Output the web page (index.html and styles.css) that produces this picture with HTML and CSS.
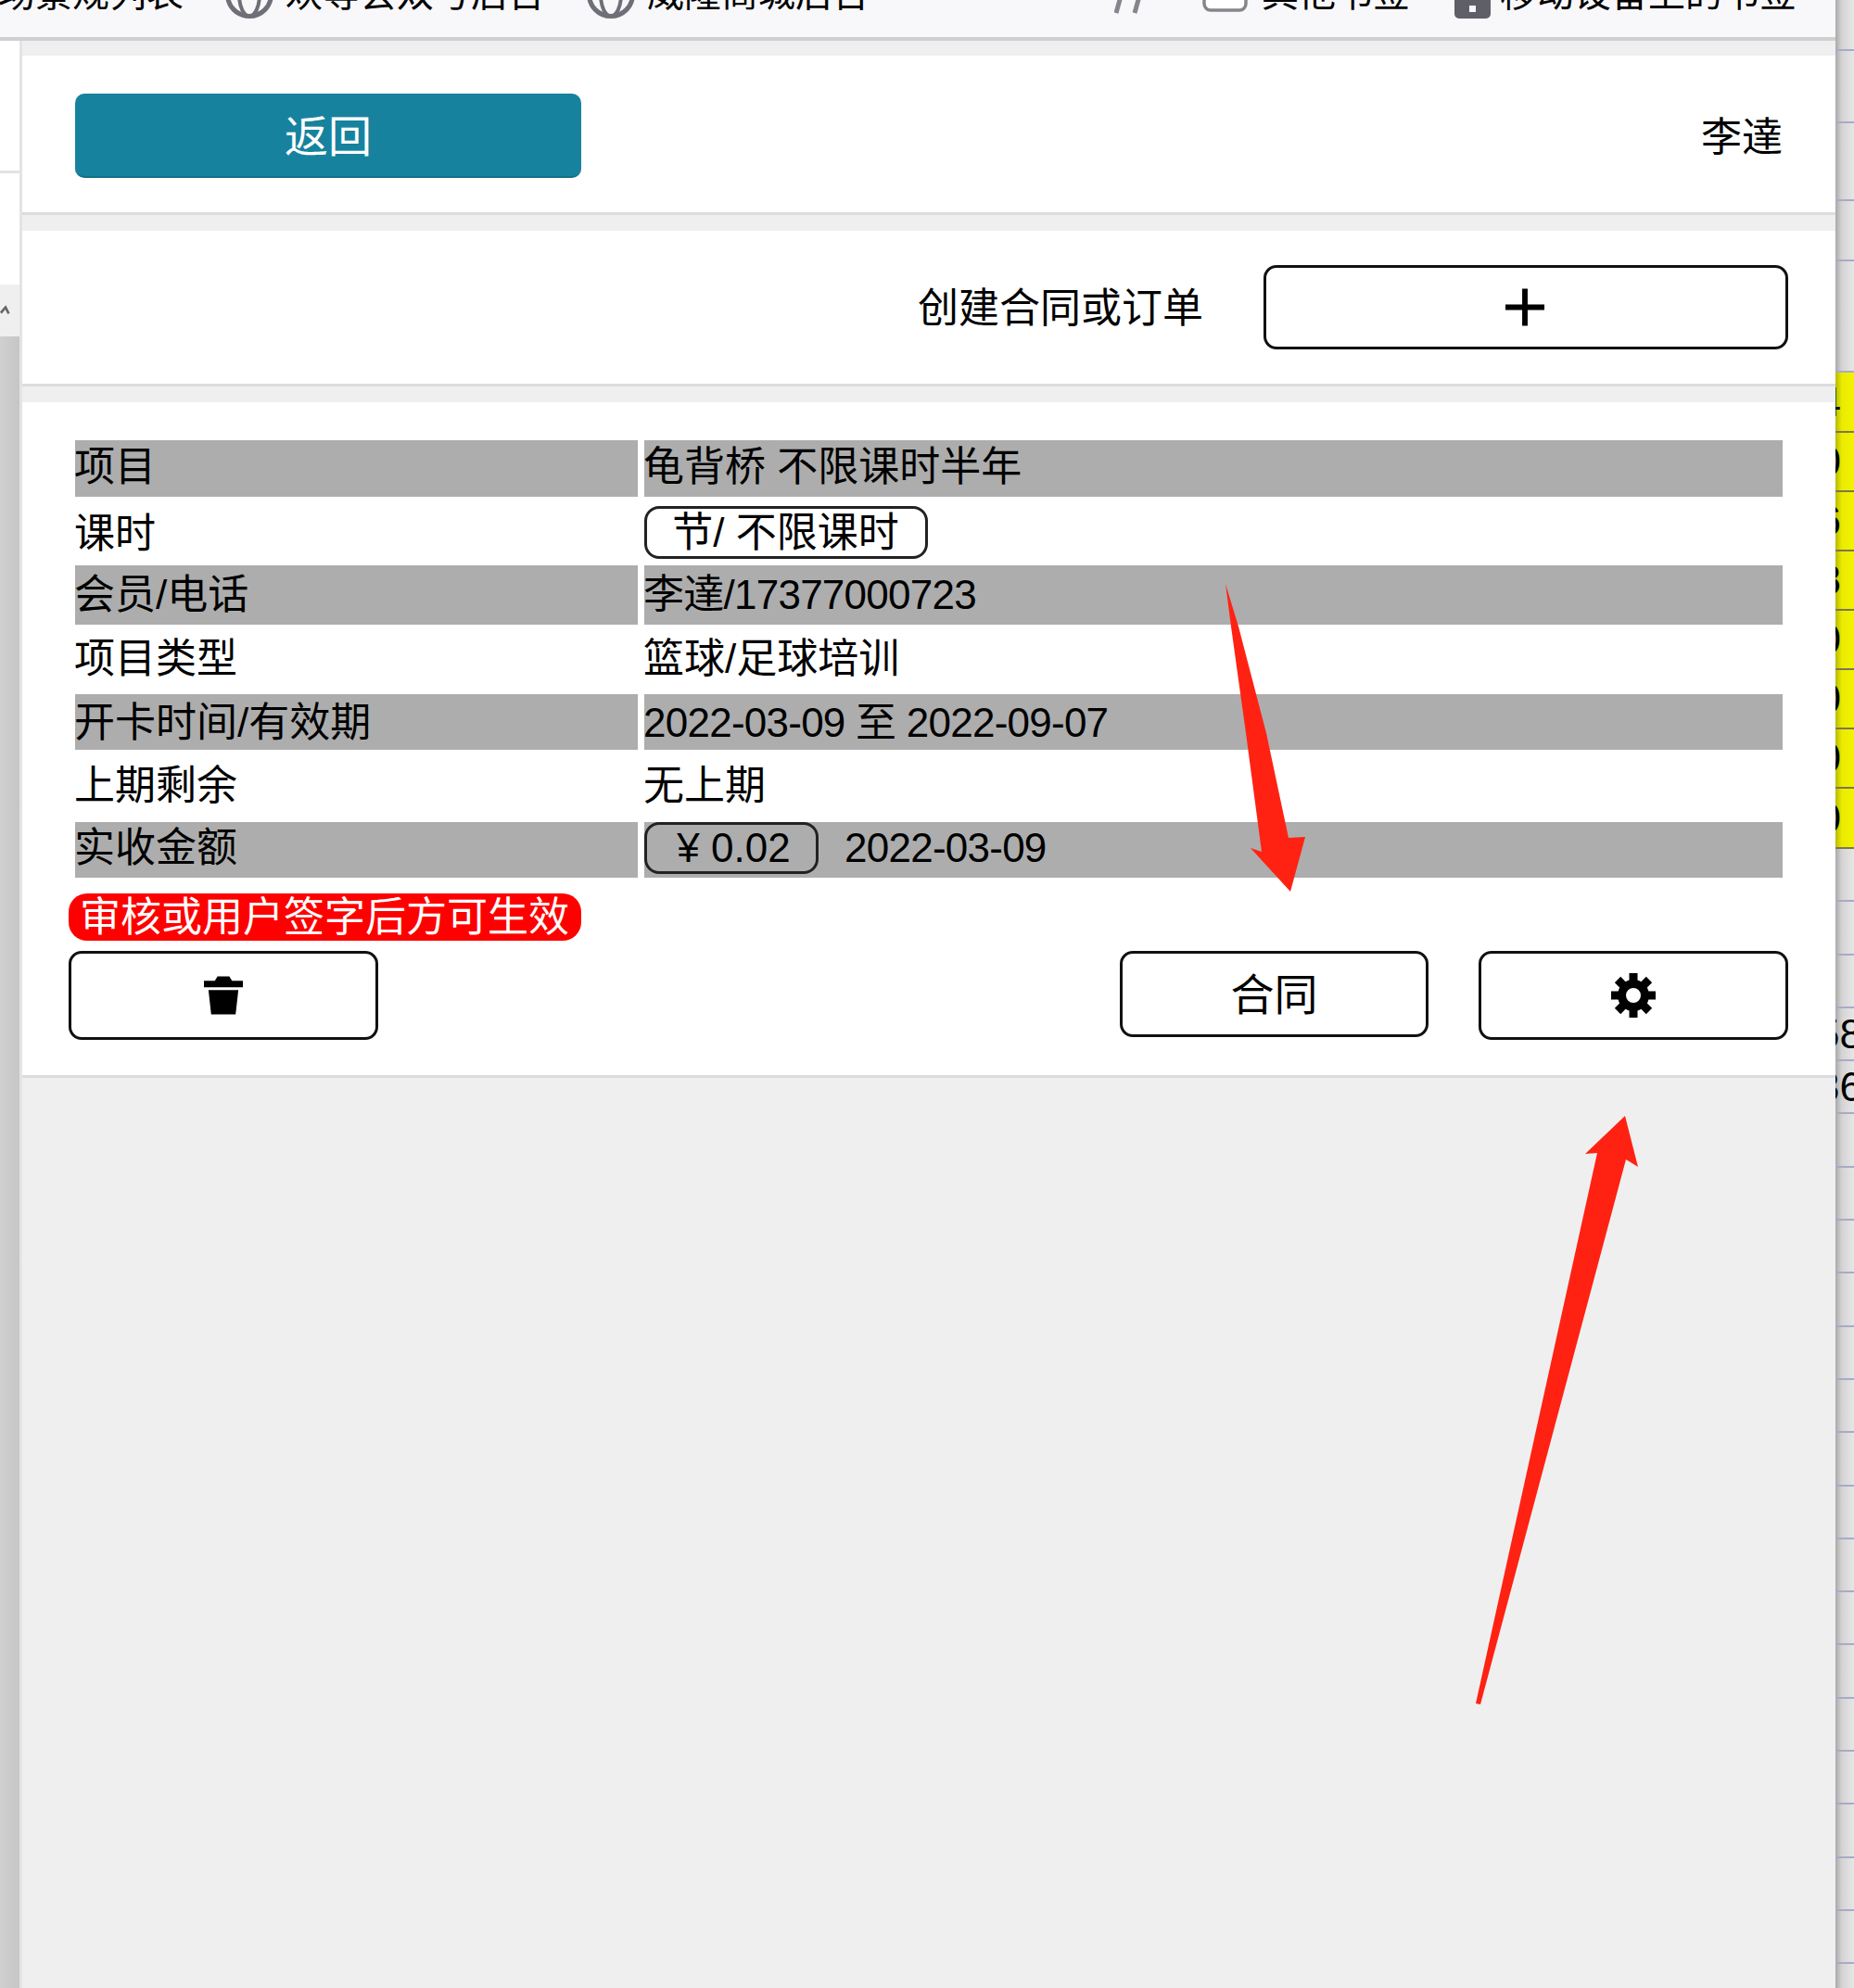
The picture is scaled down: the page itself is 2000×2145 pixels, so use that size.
FILE: index.html
```html
<!DOCTYPE html>
<html lang="zh-CN">
<head>
<meta charset="utf-8">
<title>合同</title>
<link rel="stylesheet" href="styles.css">
</head>
<body>
<svg class="defs" width="0" height="0" aria-hidden="true">
  <symbol id="globe" viewBox="0 0 52 52">
    <circle cx="26" cy="26" r="23.5" fill="none" stroke="#6f6f78" stroke-width="5"/>
    <ellipse cx="26" cy="26" rx="11" ry="23.5" fill="none" stroke="#6f6f78" stroke-width="4"/>
  </symbol>
</svg>
<div class="window">
  <div class="main">
    <div class="bar">
      <div class="bm first"><span class="bm-text">场景规列表</span></div>
      <div class="bm"><svg class="ic-globe"><use href="#globe"/></svg><span class="bm-text">欢等会双号后台</span></div>
      <div class="bm third"><svg class="ic-globe"><use href="#globe"/></svg><span class="bm-text">威隆商城后台</span></div>
      <svg class="ic-more" viewBox="0 0 36 40"><path d="M12 0L2 36M32 0L22 36" fill="none" stroke="#85858c" stroke-width="5"/></svg>
      <div class="bm folder"><svg class="ic-folder" viewBox="0 0 49 40"><rect x="2" y="-20" width="45" height="58" rx="7" fill="#fff" stroke="#85858c" stroke-width="3.500"/></svg><span class="bm-text">其他书签</span></div>
      <div class="bm phone"><svg class="ic-phone" viewBox="0 0 39 52"><rect x="0" y="-20" width="39" height="72" rx="5" fill="#5f5f68"/><rect x="5" y="-20" width="29" height="52" fill="#f8f8fb"/><rect x="16" y="38" width="7" height="7" fill="#f8f8fb"/></svg><span class="bm-text">移动设备上的书签</span></div>
    </div>
    <div class="body">
      <div class="side">
        <div class="side-top"></div>
        <div class="side-mid"></div>
        <div class="side-arrow"><svg class="ic-caret" viewBox="0 0 14 14"><path d="M1 10L7 3L11 11" fill="none" stroke="#666" stroke-width="3"/></svg></div>
        <div class="side-thumb"></div>
      </div>
      <div class="content">
        <section class="section head">
          <button class="back">返回</button>
          <span class="name">李達</span>
        </section>
        <section class="section create">
          <span class="create-label">创建合同或订单</span>
          <button class="btn btn-add"><svg class="ic-plus" viewBox="0 0 43 41"><path d="M18.500 0h6v17.500h18.500v6h-18.500v17.500h-6v-17.500h-18.500v-6h18.500z"/></svg></button>
        </section>
        <section class="section card">
          <div class="table">
            <div class="cell odd r1">项目</div><div class="cell odd r1">龟背桥 不限课时半年</div>
            <div class="cell r2">课时</div><div class="cell r2-tag"><span class="tag tag-hours">节/ 不限课时</span></div>
            <div class="cell odd">会员/电话</div><div class="cell odd num">李達/17377000723</div>
            <div class="cell r4">项目类型</div><div class="cell r4">篮球/足球培训</div>
            <div class="cell odd r5">开卡时间/有效期</div><div class="cell odd r5 num">2022-03-09 至 2022-09-07</div>
            <div class="cell">上期剩余</div><div class="cell">无上期</div>
            <div class="cell odd r7">实收金额</div><div class="cell odd r7"><span class="tag tag-money">¥ 0.02</span><span class="paid-date num">2022-03-09</span></div>
          </div>
          <div class="alert">审核或用户签字后方可生效</div>
          <div class="actions">
            <button class="btn btn-act btn-del"><svg class="ic-trash" viewBox="0 0 43 42"><path d="M15 0h13l3 5h12v7H0V5h12z"/><path d="M5 15h33l-3 27H8z"/></svg></button>
            <button class="btn btn-act btn-contract">合同</button>
            <button class="btn btn-act"><svg class="ic-gear" viewBox="-24 -24 48 48">
              <circle r="12.500" fill="none" stroke="#000" stroke-width="9"/>
              <path d="M-4.500-24h9v11h-9z"/>
              <path d="M-4.500-24h9v11h-9z" transform="rotate(45)"/>
              <path d="M-4.500-24h9v11h-9z" transform="rotate(90)"/>
              <path d="M-4.500-24h9v11h-9z" transform="rotate(135)"/>
              <path d="M-4.500-24h9v11h-9z" transform="rotate(180)"/>
              <path d="M-4.500-24h9v11h-9z" transform="rotate(225)"/>
              <path d="M-4.500-24h9v11h-9z" transform="rotate(270)"/>
              <path d="M-4.500-24h9v11h-9z" transform="rotate(315)"/>
            </svg></button>
          </div>
        </section>
      </div>
    </div>
  </div>
  <div class="sheet">
    <div class="row"></div><div class="row"></div><div class="row"></div><div class="row"></div><div class="row"></div>
    <div class="row y"><span>4</span></div><div class="row y"><span>0</span></div><div class="row y"><span>6</span></div><div class="row y"><span>8</span></div>
    <div class="row y"><span>0</span></div><div class="row y"><span>0</span></div><div class="row y"><span>0</span></div><div class="row y"><span>0</span></div>
    <div class="row"></div><div class="row"></div><div class="row"></div><div class="row t"><span>58</span></div><div class="row t"><span>36</span></div>
    <div class="row"></div><div class="row"></div><div class="row"></div><div class="row"></div><div class="row"></div><div class="row"></div>
    <div class="row"></div><div class="row"></div><div class="row"></div><div class="row"></div><div class="row"></div><div class="row"></div>
    <div class="row"></div><div class="row"></div><div class="row"></div><div class="row"></div><div class="row"></div>
  </div>
</div>
<svg class="marks" viewBox="0 0 2000 2145" aria-hidden="true">
  <polygon points="1322,630 1336,676 1366,791 1390,904 1408,903 1392,962 1349,915 1361,919 1344,791 1328,676"/>
  <polygon points="1753,1204 1767,1259 1754,1251 1597,1839 1592,1838 1723,1244 1710,1245"/>
</svg>
</body>
</html>
```

FILE: styles.css
```css
* { box-sizing: border-box; }
html, body { margin: 0; padding: 0; }
body {
  position: relative;
  width: 2000px;
  height: 2145px;
  overflow: hidden;
  font-family: "Liberation Sans", "Noto Sans CJK SC", sans-serif;
  font-size: 44px;
  color: #000;
  background: #efeff0;
}
.defs { position: absolute; }
.window { display: flex; height: 2145px; }
.main { width: 1980px; display: flex; flex-direction: column; }

/* bookmarks bar */
.bar {
  height: 44px;
  flex: none;
  display: flex;
  align-items: flex-end;
  gap: 48px;
  padding: 0 42px 24px 0;
  overflow: hidden;
  background: #f8f8fb;
  border-bottom: 4px solid #cfcfd1;
  font-size: 40px;
}
.bm { display: flex; align-items: flex-end; gap: 13px; flex: none; }
.first { margin-left: -2px; margin-right: -3px; }
.third { margin-left: -3px; }
.bm-text { line-height: 40px; margin-bottom: 3px; white-space: nowrap; }
.ic-globe { width: 52px; height: 52px; flex: none; margin-bottom: -4px; }
.ic-more { width: 36px; height: 40px; flex: none; margin-left: auto; margin-right: 11px; margin-bottom: -2px; }
.ic-folder { width: 49px; height: 40px; flex: none; margin-bottom: 3px; }
.ic-phone { width: 39px; height: 52px; flex: none; margin-bottom: -4px; }
.phone { gap: 10px; }
.folder { gap: 15px; }

/* left strip */
.body { flex: 1; display: flex; min-height: 0; }
.side {
  width: 24px;
  flex: none;
  display: flex;
  flex-direction: column;
  border-right: 3px solid #e4e4e6;
}
.side-top { height: 143px; background: #fff; border-bottom: 3px solid #e2e2e2; }
.side-mid { height: 120px; background: #fff; }
.side-arrow { height: 56px; background: #efefef; display: flex; align-items: center; }
.ic-caret { width: 12px; height: 14px; }
.side-thumb { flex: 1; background: linear-gradient(to right, #d0d0d0, #c6c6c6); }

/* content */
.content {
  flex: 1;
  display: flex;
  flex-direction: column;
  gap: 17px;
  padding-top: 16px;
  background: #efeff0;
}
.section { background: #fff; border-bottom: 3px solid #dcdcde; }
.head {
  height: 172px;
  display: flex;
  align-items: center;
  justify-content: space-between;
  padding: 0 57px;
}
.back {
  width: 546px;
  height: 91px;
  margin-top: 4px;
  padding: 0 0 5px;
  border: 0;
  border-bottom: 2px solid #126f87;
  border-radius: 10px;
  background: #17829e;
  color: #fff;
  font-family: inherit;
  font-size: 47px;
}
.create {
  height: 168px;
  display: flex;
  align-items: center;
  justify-content: flex-end;
  gap: 65px;
  padding-right: 51px;
}
.create-label { margin-bottom: 5px; }
.btn {
  display: flex;
  align-items: center;
  justify-content: center;
  padding: 0;
  background: #fff;
  border: 3px solid #111;
  border-radius: 14px;
  font: inherit;
  color: #000;
}
.btn-add { width: 566px; height: 91px; padding-right: 3px; }
.ic-plus { width: 42px; height: 41px; }

.card { height: 729px; padding: 41px 57px 0; }
.table {
  display: grid;
  grid-template-columns: 607px 1228px;
  grid-template-rows: 61px 74px 64px 75px 60px 78px 60px;
  column-gap: 7px;
}
.cell { display: flex; align-items: center; line-height: 50px; white-space: nowrap; text-indent: -1px; }
.odd { background: #adadad; }
.r1 { padding-bottom: 3px; }
.r2 { padding-top: 5px; }
.r2-tag { padding-top: 3px; }
.r4 { padding-bottom: 2px; }
.r5 { padding-top: 2px; }
.r7 { padding-bottom: 4px; }
.num { letter-spacing: -0.75px; }
.tag {
  display: flex;
  align-items: center;
  justify-content: center;
  border: 3px solid #222;
  border-radius: 16px;
}
.tag-hours { width: 306px; height: 57px; background: #fff; }
.tag-money { width: 188px; height: 56px; padding-left: 6px; }
.paid-date { margin-left: 29px; }
.alert {
  width: 553px;
  height: 51px;
  margin: 17px 0 0 -7px;
  padding-left: 12px;
  border-radius: 20px;
  background: #ff0000;
  color: #fff;
  line-height: 52px;
  white-space: nowrap;
}
.actions {
  display: flex;
  align-items: flex-start;
  gap: 54px;
  margin: 11px -6px 0 -7px;
}
.btn-act { width: 334px; height: 96px; }
.btn-del { margin-right: auto; }
.btn-contract { width: 333px; height: 93px; padding-bottom: 6px; font-size: 47px; }
.ic-trash { width: 42px; height: 42px; }
.ic-gear { width: 48px; height: 48px; }

/* spreadsheet behind the window */
.sheet {
  width: 20px;
  flex: none;
  display: grid;
  grid-template-rows: 55px 78px 84px 65px 120px 65px 64px 64px 64px 64px 64px 64px 65px;
  grid-auto-rows: 57.300px;
  overflow: hidden;
  background: #e4e4e4;
}
.row {
  display: flex;
  align-items: center;
  overflow: hidden;
  min-width: 0;
  border-bottom: 2px solid #a7abc4;
  background: linear-gradient(to right, #a9a9a9, #d4d4d4 35%, #e6e6e6);
}
.y {
  justify-content: flex-end;
  padding-right: 14px;
  border-bottom-color: #7c7650;
  background: linear-gradient(to right, #b9b900, #ebeb00 35%, #f2f200);
}
.t span { margin-left: -20px; }
.row span { flex: none; line-height: 50px; }

/* annotation arrows */
.marks { position: absolute; left: 0; top: 0; width: 2000px; height: 2145px; pointer-events: none; }
.marks polygon { fill: #ff2213; }
```
